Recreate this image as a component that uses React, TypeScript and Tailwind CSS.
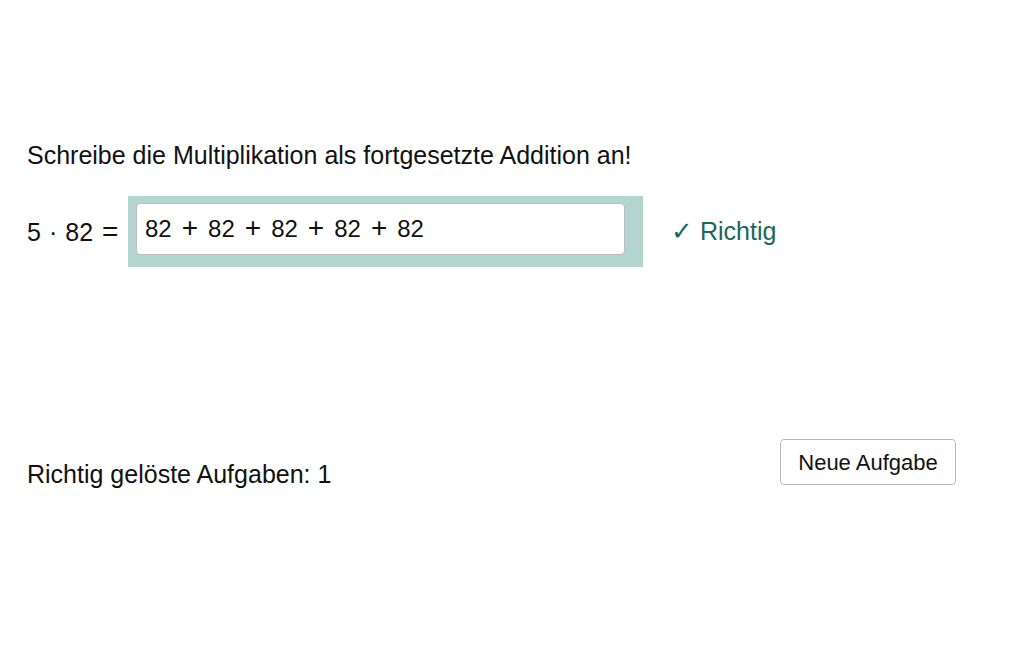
import React from "react";

function Plus() {
  return <span className="mx-[10px] text-[28px] leading-[28px] font-light">+</span>;
}

export default function App() {
  const font = { fontFamily: '"Liberation Sans", Arial, sans-serif' };
  return (
    <div className="w-[1032px] h-[645px] bg-white text-[#111] relative" style={font}>
      <div className="pt-[139px] pl-[27px]">
        <div className="text-[25px] leading-[32px] h-[32px]">Schreibe die Multiplikation als fortgesetzte Addition an!</div>
        <div className="flex items-center mt-[25px] h-[71px]">
          <div className="text-[25px] w-[101px] whitespace-nowrap leading-[28px]">
            5<span className="mx-[8px]">·</span>82<span className="ml-[9px] text-[28px] leading-[28px]">=</span>
          </div>
          <div className="w-[515px] h-[71px] bg-[#b3d4cf] pt-[7px] pl-[8px]">
            <div className="w-[489px] h-[52px] bg-white border border-[#bdbdbd] rounded-[4px] pl-[8px] pt-[10px] text-[24px] leading-[28px] whitespace-nowrap">
              82<Plus />82<Plus />82<Plus />82<Plus />82
            </div>
          </div>
          <div className="ml-[28px] text-[25px] text-[#17695c] whitespace-nowrap">
            <span className="text-[26px]">✓</span> Richtig
          </div>
        </div>
        <div className="flex items-end justify-between w-[929px] mt-[172px]">
          <div className="text-[25px] mb-[-8px]">Richtig gelöste Aufgaben: 1</div>
          <button className="w-[176px] h-[46px] border border-[#b8b8b8] rounded-[4px] text-[22px] bg-white">Neue Aufgabe</button>
        </div>
      </div>
    </div>
  );
}
